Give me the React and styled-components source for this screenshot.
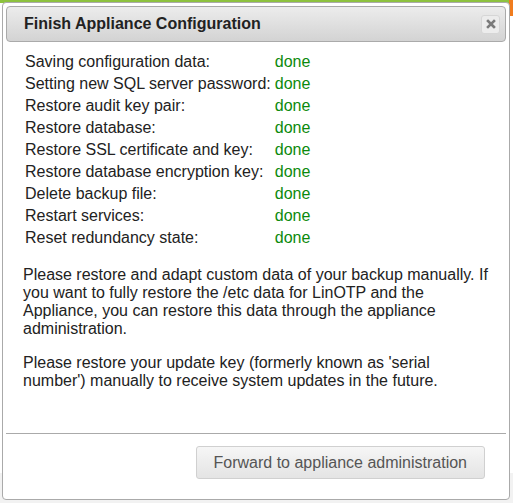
import React from 'react';
import styled, { createGlobalStyle } from 'styled-components';

const GlobalStyle = createGlobalStyle`
  html, body {
    margin: 0;
    padding: 0;
    background: #fff;
    font-family: "Liberation Sans", Arial, sans-serif;
  }`

const Page = styled.div`
  position: relative;
  width: 513px;
  height: 503px;
  overflow: hidden;
  background: #f2f2f2;`

const PageHeader = styled.div`
  display: flex;
  height: 470px;
  background: #fff;
  border-top: 3px solid #8dc23f;`

const HeaderAccent = styled.div`
  margin-left: auto;
  width: 4px;
  height: 16px;
  margin-top: -3px;
  background: #f07c1e;`

const Dialog = styled.div`
  position: absolute;
  top: 2px;
  left: 2px;
  width: 500px;
  height: 490px;
  padding: 3px;
  display: flex;
  flex-direction: column;
  background: #fff;
  border: 1px solid #aaa;
  border-radius: 4px;
  color: #222;
  font-size: 16px;`

const TitleBar = styled.div`
  display: flex;
  align-items: center;
  justify-content: space-between;
  height: 34px;
  padding: 0 5px 0 17px;
  border: 1px solid #aaa;
  border-radius: 4px;
  background: linear-gradient(#ececec, #d3d3d3);`

const Title = styled.span`
  font-weight: bold;
  font-size: 16px;
  color: #222;`

const CloseButton = styled.button`
  display: flex;
  align-items: center;
  justify-content: center;
  width: 19px;
  height: 19px;
  padding: 0;
  border: 1px solid #d6d6d6;
  border-radius: 3px;
  background: #ececec;
  cursor: pointer;`

const Content = styled.div`
  flex: 1;
  padding: 9px 16px 0 17px;`

const StepTable = styled.table`
  border-collapse: collapse;
  font-size: 16px;
  td {
    padding: 2px 2px;
    white-space: nowrap;
  }`

const Status = styled.td`
  color: #0c8a0c;`

const Note = styled.p`
  margin: 17px 0 0 0;
  line-height: 18px;
  & + & {
    margin-top: 16px;
  }`

const ButtonPane = styled.div`
  display: flex;
  justify-content: flex-end;
  padding: 12px 21px 17px 0;
  border-top: 1px solid #aaa;`

const ActionButton = styled.button`
  height: 33px;
  padding: 0 17px;
  font-family: "Liberation Sans", Arial, sans-serif;
  font-size: 16px;
  color: #555;
  border: 1px solid #d0d0d0;
  border-radius: 3px;
  background: linear-gradient(#f6f6f6, #e4e4e4);
  cursor: pointer;`

const steps = [
  'Saving configuration data:',
  'Setting new SQL server password:',
  'Restore audit key pair:',
  'Restore database:',
  'Restore SSL certificate and key:',
  'Restore database encryption key:',
  'Delete backup file:',
  'Restart services:',
  'Reset redundancy state:',
];

const CloseIcon = () => (
  <svg width="10" height="10" viewBox="0 0 10 10">
    <path d="M2 2 L8 8 M8 2 L2 8" stroke="#7a7a7a" strokeWidth="2.6" strokeLinecap="square" />
  </svg>
);

const App = () => {
  return (
    <Page>
      <GlobalStyle />
      <PageHeader>
        <HeaderAccent />
      </PageHeader>
      <Dialog>
        <TitleBar>
          <Title>Finish Appliance Configuration</Title>
          <CloseButton aria-label="close"><CloseIcon /></CloseButton>
        </TitleBar>
        <Content>
          <StepTable>
            <tbody>
              {steps.map((s) => (
                <tr key={s}>
                  <td>{s}</td>
                  <Status>done</Status>
                </tr>
              ))}
            </tbody>
          </StepTable>
          <Note>
            Please restore and adapt custom data of your backup manually. If
            you want to fully restore the /etc data for LinOTP and the
            Appliance, you can restore this data through the appliance
            administration.
          </Note>
          <Note>
            Please restore your update key (formerly known as 'serial
            number') manually to receive system updates in the future.
          </Note>
        </Content>
        <ButtonPane>
          <ActionButton>Forward to appliance administration</ActionButton>
        </ButtonPane>
      </Dialog>
    </Page>
  )
}

export default App;
